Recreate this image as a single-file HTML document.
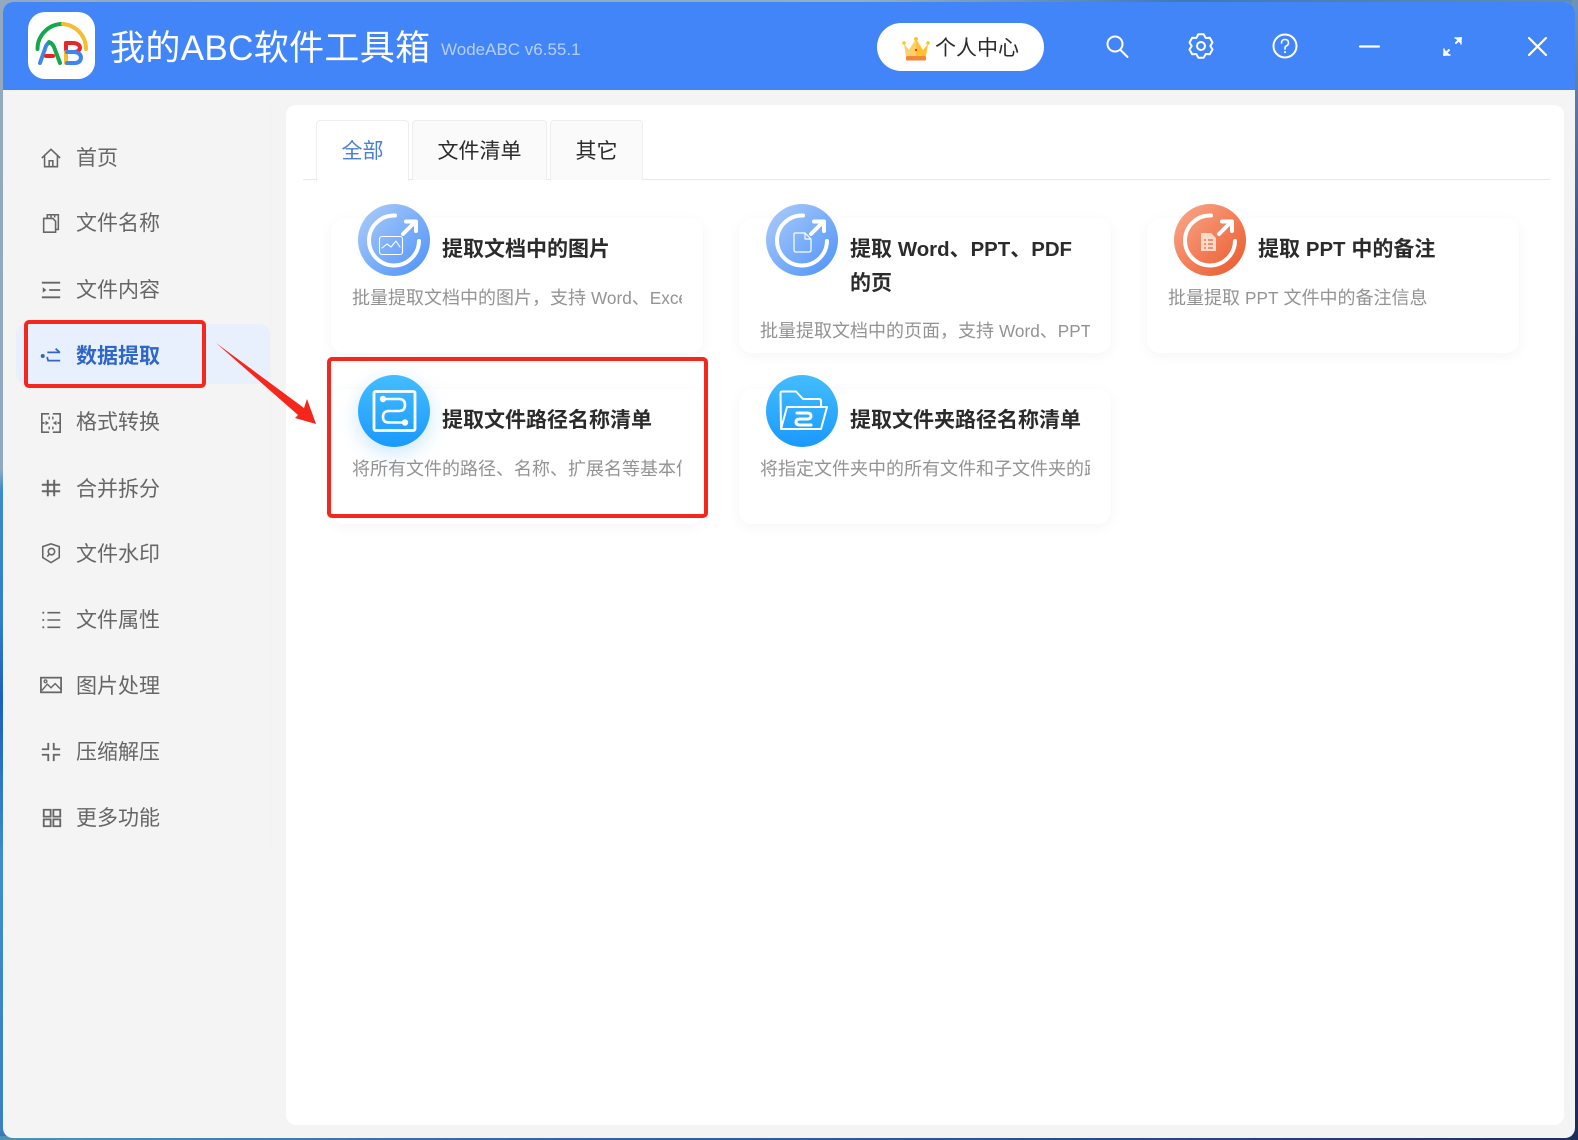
<!DOCTYPE html>
<html lang="zh-CN"><head><meta charset="utf-8"><title>我的ABC软件工具箱</title>
<style>
*{box-sizing:border-box}
html,body{margin:0;padding:0;width:1578px;height:1140px;overflow:hidden}
body{position:relative;font-family:"Liberation Sans","Noto Sans CJK SC",sans-serif;
background:linear-gradient(180deg,#93a9bf 0,#8fa9c2 470px,#3a8ccf 490px,#2f7fcb 620px,#1c5fc0 700px,#3b8fd0 860px,#3a7fc4 1130px,#3d6fa8 1140px)}
.bgb{position:absolute;left:0;top:1136px;width:1578px;height:4px;background:linear-gradient(90deg,#4d93b8,#3a68a8 30%,#2c5596 60%,#1f2f60)}
.bgr{position:absolute;right:0;top:0;width:6px;height:1140px;background:linear-gradient(180deg,#6f93b5,#2a3f72 30%,#1c2c5c)}
.bgt{position:absolute;left:0;top:0;width:1578px;height:4px;background:linear-gradient(90deg,#93a9bf,#8fb0bd 55%,#3f78b8 75%,#5f8fae)}
.win{position:absolute;left:3px;top:2px;width:1572px;height:1136px;background:#f4f4f4;border-radius:10px;overflow:hidden}
.hd{position:absolute;left:0;top:0;width:1572px;height:88px;background:#4285f9}
.abs{position:absolute;white-space:nowrap}
.nav{position:absolute;left:76px;font-size:21px;line-height:30px;color:#666;white-space:nowrap}
.ic{position:absolute;left:40px;width:22px;height:22px;fill:none;stroke:#666;stroke-width:1.7}
.card{position:absolute;width:372px;height:135px;background:#fff;border-radius:13px;box-shadow:0 3px 14px rgba(0,0,0,.045)}
.t{position:absolute;font-size:21px;font-weight:700;color:#2b2b2b;line-height:33px;white-space:nowrap}
.t span{font-size:20.4px}
.d{position:absolute;font-size:18px;color:#939393;line-height:26px;white-space:nowrap;overflow:hidden;width:330px}
.d span{font-size:17.2px}
.circ{position:absolute;width:72px;height:72px}
.tab{position:absolute;top:120px;height:60px;background:#fafafa;border:1px solid #eee;border-bottom:0;border-radius:4px 4px 0 0;text-align:center;font-size:21px;line-height:62px;color:#2b2b2b}
</style></head><body>
<div class="bgt"></div><div class="bgb"></div><div class="bgr"></div>
<div class="win"><div class="hd"></div></div>

<svg class="abs" style="left:28px;top:12px" width="68" height="68" viewBox="28 12 68 68">
<rect x="28" y="12" width="67" height="67" rx="17" fill="#fff"/>
<g fill="none" stroke-width="4" stroke-linecap="round">
<path d="M37.500 49A25 25 0 0 1 63 24" stroke="#14a84c"/>
<path d="M63 24A25 25 0 0 1 86 49" stroke="#f6bd30"/>
<path d="M40 63L46 46Q48 42 51 43" stroke="#3f86ea"/>
<path d="M49 42Q52 43 54 47L60 63" stroke="#14a84c"/>
<path d="M46 56H53" stroke="#ec2024"/>
<path d="M66 43V52" stroke="#e8262a"/>
<path d="M66 43H74Q80 44 80 48Q79 52 74 52" stroke="#e8262a"/>
<path d="M66 52V63" stroke="#f6bd30"/>
<path d="M67 52H75Q81 53 81 58Q80 63 75 63H67" stroke="#3f86ea"/>
</g></svg>

<div class="abs" style="left:110px;top:26px;font-size:35px;line-height:46px;color:#fff;letter-spacing:.35px">我的ABC软件工具箱</div>
<div class="abs" style="left:441px;top:38px;font-size:17px;line-height:24px;color:#b5cffb">WodeABC v6.55.1</div>

<div class="abs" style="left:877px;top:23px;width:167px;height:48px;border-radius:24px;background:#fff"></div>
<svg class="abs" style="left:902px;top:36px" width="28" height="26" viewBox="0 0 28 26">
<path d="M2 8L7 14L14 3L21 14L26 8L24 20H4Z" fill="#ffc22e"/><path d="M2 8L7 14L14 3V20H4Z" fill="#fcd06c"/>
<circle cx="2" cy="7" r="1.800" fill="#ffc22e"/><circle cx="26" cy="7" r="1.800" fill="#ffc22e"/><circle cx="14" cy="3" r="2" fill="#ffc22e"/>
<rect x="4" y="20" width="20" height="4.500" rx="1" fill="#f0873a"/><circle cx="14" cy="14" r="1.200" fill="#e0442a"/></svg>
<div class="abs" style="left:935px;top:34px;font-size:21px;line-height:30px;color:#2b2b2b">个人中心</div>

<svg class="abs" style="left:1100px;top:30px" width="460" height="32" viewBox="1100 30 460 32" fill="none" stroke="#fff" stroke-width="2" stroke-linecap="round" stroke-linejoin="round">
<circle cx="1115" cy="44" r="7.500"/><path d="M1120.500 50L1127.500 57"/>
<path d="M1198.300 34.300L1203.700 34.300L1205.650 37.950L1209.800 37.800L1212.500 42.500L1210.300 46L1212.500 49.500L1209.800 54.200L1205.650 54.050L1203.700 57.700L1198.300 57.700L1196.350 54.050L1192.200 54.200L1189.500 49.500L1191.700 46L1189.500 42.500L1192.200 37.800L1196.350 37.950Z"/>
<circle cx="1201" cy="46" r="4"/>
<circle cx="1285" cy="46" r="11.500"/><path d="M1281.500 43Q1281.500 39.500 1285 39.500Q1288.500 39.500 1288.500 43Q1288.500 45 1285.500 46.500Q1285 47 1285 49" stroke-width="1.600"/><path d="M1285 52V52.100"/>
<path d="M1360 46.500H1379" stroke-width="2.200"/>
<path d="M1444 55L1449 50M1456 43L1461 38"/><path d="M1444 49V55H1450M1455 38H1461V44" fill="#fff" stroke-width="1.400"/>
<path d="M1529 38L1546 55M1546 38L1529 55" stroke-width="2.200"/>
</svg>

<div class="abs" style="left:270px;top:105px;width:1px;height:745px;background:#f1f1f1"></div>
<div class="abs" style="left:16px;top:324px;width:254px;height:60px;background:#e8f0fd;border-radius:10px"></div>

<svg class="ic" style="top:147px" viewBox="0 0 24 24"><path d="M2 12L12 2.500L22 12M5 10V21.500H19V10M10 21V15H14V21"/></svg>
<div class="nav" style="top:144px">首页</div>
<svg class="ic" style="top:212px" viewBox="0 0 24 24"><path d="M4 7H14L17 10V22H4ZM8 7V3H20V19H17M12 3V6M16 3V6"/></svg>
<div class="nav" style="top:209px">文件名称</div>
<svg class="ic" style="top:279px" viewBox="0 0 24 24"><path d="M2 4H22M10 12H22M2 20H22" stroke-width="2"/><path d="M3 9L7 12L3 15Z" fill="#666" stroke="none"/></svg>
<div class="nav" style="top:276px">文件内容</div>
<svg class="ic" style="top:345px;stroke:#2f66c8" viewBox="0 0 24 24"><circle cx="3" cy="12" r="2.200" fill="#2f66c8" stroke="none"/><path d="M8 8H22M17 4L21 7.500M8 17H22M8 13Q8 17 10 17" stroke-width="1.900"/></svg>
<div class="nav" style="top:342px;color:#2f66c8;font-weight:700">数据提取</div>
<svg class="ic" style="top:412px" viewBox="0 0 24 24"><path d="M10 2H2V22H10M14 2H22V22H14M2 12H5M22 12H19" stroke-width="1.800"/><path d="M10 5V8M14 5V8M10 16V19M14 16V19" stroke-width="1.600"/><path d="M6 9.500L10 12L6 14.500ZM18 9.500L14 12L18 14.500Z" fill="#666" stroke="none"/></svg>
<div class="nav" style="top:408px">格式转换</div>
<svg class="ic" style="top:477px" viewBox="0 0 24 24"><path d="M2 8.500H22M2 15.500H22M8.500 3V21M15.500 3V21" stroke-width="2.200"/></svg>
<div class="nav" style="top:475px">合并拆分</div>
<svg class="ic" style="top:542px" viewBox="0 0 24 24"><path d="M12 2L21 5V17L12 22.500L3 17V5Z"/><circle cx="12.500" cy="10.500" r="3.500"/><path d="M10 13L8 16"/></svg>
<div class="nav" style="top:540px">文件水印</div>
<svg class="ic" style="top:609px;left:41px" viewBox="0 0 24 24"><path d="M7 4H21M7 12H21M7 20H21"/><path d="M1.500 4H3.500M1.500 12H3.500M1.500 20H3.500" stroke-width="2"/></svg>
<div class="nav" style="top:606px">文件属性</div>
<svg class="ic" style="top:674px;stroke-width:1.500" viewBox="0 0 24 24"><rect x="1" y="4" width="22" height="16" stroke-width="1.900"/><circle cx="6" cy="8" r="1.500"/><path d="M2 18L8 11L12 15L16.500 10.500L23 17"/></svg>
<div class="nav" style="top:672px">图片处理</div>
<svg class="ic" style="top:741px" viewBox="0 0 24 24"><path d="M9 2V9H2M15 2V9H22M2 15H9V22M22 15H15V22" stroke-width="2"/></svg>
<div class="nav" style="top:738px">压缩解压</div>
<svg class="ic" style="top:807px;left:41px" viewBox="0 0 24 24"><path d="M3 3H10.500V10.500H3ZM13.500 3H21V10.500H13.500ZM3 13.500H10.500V21H3ZM13.500 13.500H21V21H13.500Z" stroke-width="2"/></svg>
<div class="nav" style="top:804px">更多功能</div>

<div class="abs" style="left:286px;top:105px;width:1278px;height:1020px;background:#fff;border-radius:10px"></div>
<div class="abs" style="left:303px;top:179px;width:1247px;height:1px;background:#e8e8e8"></div>
<div class="tab" style="left:316px;width:93px;height:61px;background:#fff;color:#4a7fd8">全部</div>
<div class="tab" style="left:412px;width:135px">文件清单</div>
<div class="tab" style="left:550px;width:93px">其它</div>

<div class="card" style="left:331px;top:218px"></div>
<div class="card" style="left:739px;top:218px"></div>
<div class="card" style="left:1147px;top:218px"></div>
<div class="card" style="left:331px;top:389px"></div>
<div class="card" style="left:739px;top:389px"></div>

<svg class="circ" style="left:358px;top:204px" viewBox="0 0 72 72" fill="none" stroke="#fff" stroke-linecap="round" stroke-linejoin="round">
<defs><linearGradient id="b" x1="0" y1="0" x2="1" y2="1"><stop offset="0" stop-color="#aecdfb"/><stop offset="1" stop-color="#4c92f8"/></linearGradient>
<linearGradient id="o" x1="0" y1="0" x2="1" y2="1"><stop offset="0" stop-color="#fba98c"/><stop offset="1" stop-color="#e9582a"/></linearGradient>
<linearGradient id="c" x1="0" y1="0" x2="0" y2="1"><stop offset="0" stop-color="#43bdff"/><stop offset="1" stop-color="#1a99ff"/></linearGradient></defs>
<circle cx="36" cy="36" r="36" fill="url(#b)" stroke="none"/>
<path d="M37 11.500A25 25 0 1 0 61 37" stroke-width="4"/><path d="M45 30L57 18M48 17.500H58V27" stroke-width="4"/>
<rect x="21.500" y="32.500" width="23" height="18" rx="2.500" stroke-width="1.100"/><path d="M24 44L29 40L33 43L38 37L42 43" stroke-width="1.100"/></svg>
<div class="t" style="left:442px;top:233px">提取文档中的图片</div>
<div class="d" style="left:352px;top:285px">批量提取文档中的图片，支持 <span>Word</span>、<span>Excel、PPT</span> 等格式</div>

<svg class="circ" style="left:766px;top:204px" viewBox="0 0 72 72" fill="none" stroke="#fff" stroke-linecap="round" stroke-linejoin="round">
<circle cx="36" cy="36" r="36" fill="url(#b)" stroke="none"/>
<path d="M37 11.500A25 25 0 1 0 61 37" stroke-width="4"/><path d="M45 30L57 18M48 17.500H58V27" stroke-width="4"/>
<path d="M29 29H39L45 35V46Q45 48 43 48H30Q28 48 28 46V30Q28 29 29 29ZM39 29V35H45" stroke-width="1.200"/></svg>
<div class="t" style="left:850px;top:233px">提取 <span>Word</span>、<span>PPT</span>、<span>PDF</span><br>的页</div>
<div class="d" style="left:760px;top:318px">批量提取文档中的页面，支持 <span>Word</span>、<span>PPT</span>、<span>PDF</span> 等</div>

<svg class="circ" style="left:1174px;top:204px" viewBox="0 0 72 72" fill="none" stroke="#fff" stroke-linecap="round" stroke-linejoin="round">
<circle cx="36" cy="36" r="36" fill="url(#o)" stroke="none"/>
<path d="M37 11.500A25 25 0 1 0 61 37" stroke-width="4"/><path d="M45 30L57 18M48 17.500H58V27" stroke-width="4"/>
<path d="M27 29H37L42 34V47H27Z" fill="#fbd9cb" stroke="none"/><path d="M30 36H32M34 36H39M30 40H32M34 40H39M30 44H32M34 44H39" stroke="#e9663a" stroke-width="1.200" stroke-linecap="butt"/></svg>
<div class="t" style="left:1258px;top:233px">提取 <span>PPT</span> 中的备注</div>
<div class="d" style="left:1168px;top:285px">批量提取 <span>PPT</span> 文件中的备注信息</div>

<svg class="circ" style="left:358px;top:375px;overflow:visible;filter:drop-shadow(0 6px 10px rgba(60,165,255,.28))" viewBox="0 0 72 72" fill="none" stroke="#fff" stroke-linecap="round" stroke-linejoin="round">
<circle cx="36" cy="36" r="36" fill="url(#c)" stroke="none"/>
<rect x="16" y="16.500" width="41" height="39" rx="1.500" stroke-width="2.800"/>
<path d="M25 24H41Q47 24 47 30Q47 36 41 36H31Q25 36 25 42Q25 47.500 31 47.500H47" stroke-width="2.600"/>
<circle cx="25" cy="24" r="3.200" fill="#fff" stroke="none"/><circle cx="47" cy="47.500" r="3.200" fill="#fff" stroke="none"/></svg>
<div class="t" style="left:442px;top:404px">提取文件路径名称清单</div>
<div class="d" style="left:352px;top:456px">将所有文件的路径、名称、扩展名等基本信息提取</div>

<svg class="circ" style="left:766px;top:375px" viewBox="0 0 72 72" fill="none" stroke="#fff" stroke-linecap="round" stroke-linejoin="round">
<circle cx="36" cy="36" r="36" fill="url(#c)" stroke="none"/>
<path d="M15 53L14.500 18Q14.500 16.500 16 16.500H30L37 24H53Q55 24 55 26V31" stroke-width="2"/>
<path d="M21 32H61L55 54H15Z" stroke-width="2"/>
<path d="M31 38H41Q45 38 45 41Q45 44 41 44H34Q30 44 30 47Q30 50 34 50H45" stroke-width="3"/></svg>
<div class="t" style="left:850px;top:404px">提取文件夹路径名称清单</div>
<div class="d" style="left:760px;top:456px">将指定文件夹中的所有文件和子文件夹的路径名称</div>

<div class="abs" style="left:24px;top:320px;width:182px;height:68px;border:4px solid #f5261b;border-radius:5px"></div>
<div class="abs" style="left:327px;top:357px;width:381px;height:161px;border:4px solid #f5261b;border-radius:5px"></div>
<svg class="abs" style="left:210px;top:338px" width="115" height="95" viewBox="210 338 115 95"><path d="M216 343L304 408L307 399L316 424L295 418L298 415Z" fill="#f5261b"/></svg>
</body></html>
